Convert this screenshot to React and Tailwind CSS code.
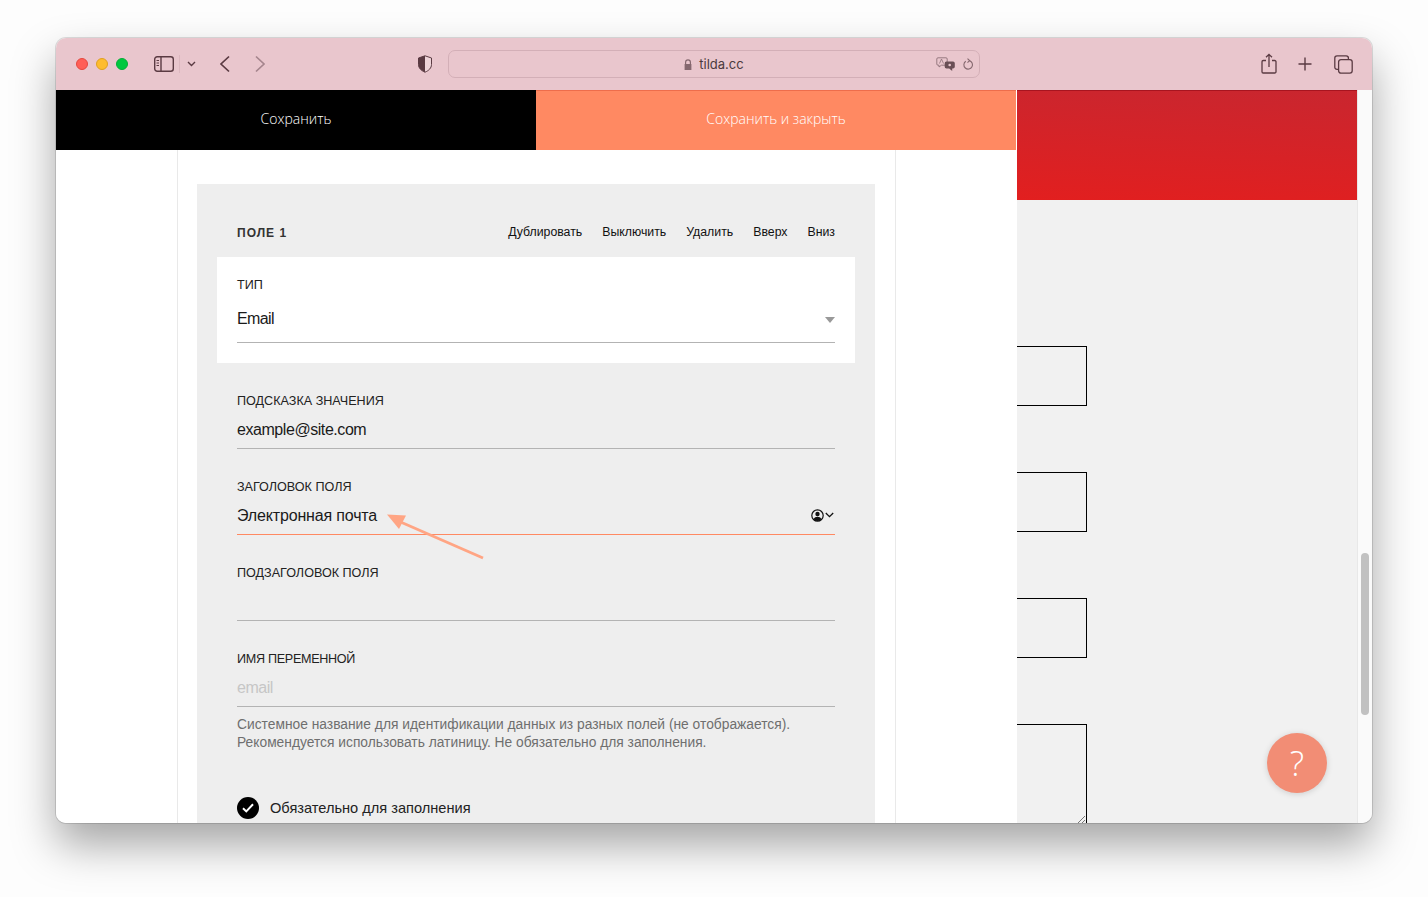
import React from "react";

function Field({ label, value, line = "border-[#b3b3b3]", valueClass = "text-[#1a1a1a]", labelClass = "", icon, className = "" }) {
  return (
    <div className={className}>
      <div className={`h-4 text-[12.6px] leading-[18px] text-[#222] uppercase ${labelClass}`}>{label}</div>
      <div className={`mt-[10px] pb-2 border-b ${line} flex items-center justify-between`}>
        <span className={`h-[22px] text-[16px] leading-[24px] ${valueClass}`}>{value}</span>
        {icon}
      </div>
    </div>
  );
}

function Toolbar() {
  const ic = "#5a3a42";
  return (
    <div className="relative h-[52px] shrink-0 bg-[#e9c6cd] flex items-center">
      <span className="ml-5 w-3 h-3 rounded-full bg-[#ff5f57] border border-[#e5483f]" />
      <span className="ml-2 w-3 h-3 rounded-full bg-[#febc2e] border border-[#e0a020]" />
      <span className="ml-2 w-3 h-3 rounded-full bg-[#00c83f] border border-[#05ad38]" />
      <svg className="ml-[26px]" width="20" height="16" viewBox="0 0 20 16" fill="none" stroke={ic} strokeWidth="1.4">
        <rect x="0.7" y="0.7" width="18.6" height="14.6" rx="2.5" />
        <path d="M7 1v14" />
        <path d="M2.500 4.500h2.500M2.500 7h2.500M2.500 9.500h2.500" strokeWidth="1" />
      </svg>
      <span className="ml-[5px] w-px h-[18px] bg-[#dcb7bf]" />
      <svg className="ml-[7px]" width="9" height="6" viewBox="0 0 9 6" fill="none" stroke={ic} strokeWidth="1.4">
        <path d="M1 1l3.500 3.500L8 1" />
      </svg>
      <svg className="ml-[23px]" width="12" height="18" viewBox="0 0 12 18" fill="none" stroke={ic} strokeWidth="1.7">
        <path d="M10 1.500L2 9l8 7.500" />
      </svg>
      <svg className="ml-[23px]" width="12" height="18" viewBox="0 0 12 18" fill="none" stroke="#a5858d" strokeWidth="1.7">
        <path d="M2 1.500L10 9l-8 7.500" />
      </svg>
      <svg className="ml-[152px]" width="14" height="18" viewBox="0 0 14 18">
        <path d="M7 .8L13.500 3v6.500c0 3.600-2.800 6.200-6.500 7.700C3.300 15.700.5 13.100.5 9.500V3z" fill="#fff" fillOpacity=".25" stroke={ic} strokeWidth="1" />
        <path d="M7 .8V17.200C3.300 15.700.5 13.100.5 9.500V3z" fill={ic} />
      </svg>
      <div className="ml-[16px] w-[532px] h-[28px] rounded-[7px] border border-[#d3afb7] relative flex items-center justify-center">
        <svg className="mr-[7px]" width="8" height="11" viewBox="0 0 8 11" fill="#85686f">
          <path d="M1 5V3.300a3 3 0 016 0V5h.4v6H.6V5zm1.200 0h3.600V3.300a1.800 1.800 0 00-3.600 0z" />
        </svg>
        <span className="text-[13px] leading-4 text-[#4b3a3e] font-['Inter',sans-serif]">tilda.cc</span>
        <svg className="absolute left-[487px] top-[6px]" width="20" height="15" viewBox="0 0 20 15">
          <path d="M2 .8h8a1.200 1.200 0 011.200 1.200v5A1.200 1.200 0 0110 8.200H5.500L3 10V8.200H2A1.200 1.200 0 01.8 7V2A1.200 1.200 0 012 .8z" fill="none" stroke="#8d7078" strokeWidth=".9" />
          <path d="M3.500 6.500l2-4.500 2 4.500" fill="none" stroke="#8d7078" strokeWidth=".8" />
          <path d="M10.500 4.500H17a1.800 1.800 0 011.800 1.800v3.400a1.800 1.800 0 01-1.800 1.800h-.8V14l-3-2.500h-2.700a1.800 1.800 0 01-1.800-1.800V6.300a1.800 1.800 0 011.800-1.800z" fill="#6a4f56" />
          <circle cx="13.700" cy="8" r="1.300" fill="#e9c6cd" />
        </svg>
        <svg className="absolute left-[513px] top-[7px]" width="12" height="13" viewBox="0 0 12 13" fill="none" stroke="#85686f" strokeWidth="1.100">
          <path d="M3.800 3.200a4.300 4.300 0 103.400-.6" />
          <path d="M5.500 .6L7.600 2.600 5.500 4.600" />
        </svg>
      </div>
      <svg className="ml-[281px]" width="16" height="22" viewBox="0 0 16 22" fill="none" stroke={ic} strokeWidth="1.300">
        <path d="M5 7.500H2.200A1.200 1.200 0 001 8.700v10.100A1.200 1.200 0 002.200 20h11.600a1.200 1.200 0 001.200-1.200V8.700a1.200 1.200 0 00-1.200-1.200H11" />
        <path d="M8 14V1.500M5 4.300L8 1.300l3 3" />
      </svg>
      <svg className="ml-[21px]" width="14" height="14" viewBox="0 0 14 14" stroke={ic} strokeWidth="1.400">
        <path d="M7 .5v13M.5 7h13" />
      </svg>
      <svg className="ml-[22px]" width="19" height="19" viewBox="0 0 19 19" fill="none" stroke={ic} strokeWidth="1.300">
        <rect x="4.600" y="4.600" width="13.600" height="13.600" rx="2.400" />
        <path d="M4.600 14.400H3a2.200 2.200 0 01-2.200-2.200V3A2.200 2.200 0 013 .8h9.200A2.200 2.200 0 0114.400 3v1.600" />
      </svg>
    </div>
  );
}

function LeftPanel() {
  return (
    <div className="w-[961px] shrink-0 bg-white flex flex-col overflow-hidden">
      <div className="h-[60px] shrink-0 flex font-['Open_Sans',sans-serif] text-[14px] font-light text-white">
        <div className="w-[480px] bg-black flex items-center justify-center pb-[3px]">Сохранить</div>
        <div className="w-[480px] bg-[#ff8962] border-t border-[#ee6d4b] flex items-center justify-center pb-[4px]">Сохранить и закрыть</div>
      </div>
      <div className="ml-[121px] w-[719px] flex-1 border-x border-[#e9e9e9] pt-[34px] pl-[19px]">
        <div className="w-[678px] h-[700px] bg-[#eeeeee]">
          <div className="pt-10 pb-[17px] px-10 flex items-center justify-between">
            <span className="h-4 text-[12px] leading-[18px] font-bold tracking-[1px] text-[#333]">ПОЛЕ 1</span>
            <div className="flex gap-5 text-[12.3px] leading-4 h-4 text-[#111]">
              <span>Дублировать</span>
              <span>Выключить</span>
              <span>Удалить</span>
              <span>Вверх</span>
              <span>Вниз</span>
            </div>
          </div>
          <div className="mx-5 h-[106px] bg-white px-5 pt-[19px]">
            <div className="h-4 text-[12.6px] leading-[18px] text-[#222]">ТИП</div>
            <div className="mt-[15px] pb-[13px] border-b border-[#b3b3b3] flex items-center justify-between">
              <span className="h-[22px] text-[16px] leading-[24px] tracking-[-0.6px] text-[#1a1a1a]">Email</span>
              <span className="w-0 h-0 mt-[4px] border-x-[5px] border-x-transparent border-t-[6px] border-t-[#999]" />
            </div>
          </div>
          <div className="px-10 pt-[29px] flex flex-col gap-[29px]">
            <Field label="Подсказка значения" value="example@site.com" valueClass="text-[#1a1a1a] tracking-[-0.44px]" />
            <Field
              label="Заголовок поля"
              value="Электронная почта"
              valueClass="text-[#1a1a1a] tracking-[-0.16px]"
              line="border-[#ff8962]"
              icon={
                <span className="flex items-center gap-px pr-px">
                  <svg width="13" height="13" viewBox="0 0 13 13">
                    <circle cx="6.500" cy="6.500" r="5.700" fill="none" stroke="#111" strokeWidth="1.200" />
                    <circle cx="6.500" cy="5" r="2.200" fill="#111" />
                    <path d="M2.600 10.200c.8-1.600 2.200-2.400 3.900-2.400s3.100.8 3.900 2.400A5.500 5.500 0 016.500 12a5.500 5.500 0 01-3.900-1.800z" fill="#111" />
                  </svg>
                  <svg width="9" height="6" viewBox="0 0 9 6" fill="none" stroke="#111" strokeWidth="1.300">
                    <path d="M.8 1l3.700 3.700L8.200 1" />
                  </svg>
                </span>
              }
            />
            <Field label="Подзаголовок поля" value="" />
            <div>
              <Field label="Имя переменной" value="email" labelClass="tracking-[-0.3px]" valueClass="text-[#c6c6c6] tracking-[-0.5px]" />
              <p className="mt-[9px] text-[13.8px] leading-[18px] text-[#6f6f6f]">
                Системное название для идентификации данных из разных полей (не отображается).
                <br />
                Рекомендуется использовать латиницу. Не обязательно для заполнения.
              </p>
            </div>
          </div>
          <div className="mt-[45px] px-10 flex items-center gap-[11px]">
            <span className="w-[22px] h-[22px] rounded-full bg-black flex items-center justify-center">
              <svg width="12" height="10" viewBox="0 0 12 10" fill="none" stroke="#fff" strokeWidth="2">
                <path d="M1 5.200l3.300 3.200L11 1.300" />
              </svg>
            </span>
            <span className="text-[14.6px] leading-[18px] text-[#222]">Обязательно для заполнения</span>
          </div>
        </div>
      </div>
    </div>
  );
}

function RightPanel() {
  const box = "w-[70px] h-[60px] border-y border-r border-black";
  return (
    <div className="w-[340px] shrink-0 bg-[#f1f1f1] overflow-hidden">
      <div className="h-[110px] border-t border-[#a8141f] bg-[linear-gradient(183deg,#c9262f,#e21f1f)]" />
      <div className="mt-[146px] flex flex-col gap-[66px]">
        <div className={box} />
        <div className={box} />
        <div className={box} />
        <div className="relative w-[70px] h-[130px] border-y border-r border-black">
          <svg className="absolute left-[60px] top-[90px]" width="9" height="9" viewBox="0 0 9 9" stroke="#777" fill="none">
            <path d="M1 8l7-7M5 8l3-3" />
          </svg>
        </div>
      </div>
    </div>
  );
}

export default function App() {
  return (
    <div className="relative w-[1428px] h-[897px] overflow-hidden bg-[#fdfdfd] pt-[38px] pl-[56px] font-['Liberation_Sans',sans-serif]">
      <div className="w-[1316px] h-[785px] rounded-[10px] overflow-hidden flex flex-col shadow-[0_0_0_1px_rgba(0,0,0,0.12),0_22px_44px_rgba(0,0,0,0.35)]">
        <Toolbar />
        <div className="flex flex-1 min-h-0">
          <LeftPanel />
          <RightPanel />
          <div className="w-[15px] shrink-0 bg-[#fafafa] border-l border-[#e8e8e8] pt-[463px] pl-[3px]">
            <div className="w-2 h-[162px] rounded-full bg-[#c1c1c1]" />
          </div>
        </div>
      </div>
      <svg className="absolute left-[380px] top-[505px]" width="110" height="60" viewBox="0 0 110 60">
        <path d="M103 53L16 15" stroke="#ffa584" strokeWidth="2.800" fill="none" />
        <path d="M7 9.500L26 10.500L19 24z" fill="#ffa584" />
      </svg>
      <div className="absolute left-[1267px] top-[733px] w-[60px] h-[60px] rounded-full bg-[#f28d75] shadow-[0_1px_6px_rgba(0,0,0,0.15)] flex items-center justify-center">
        <span className="text-[34px] leading-none font-light text-white font-['Open_Sans',sans-serif]">?</span>
      </div>
    </div>
  );
}
